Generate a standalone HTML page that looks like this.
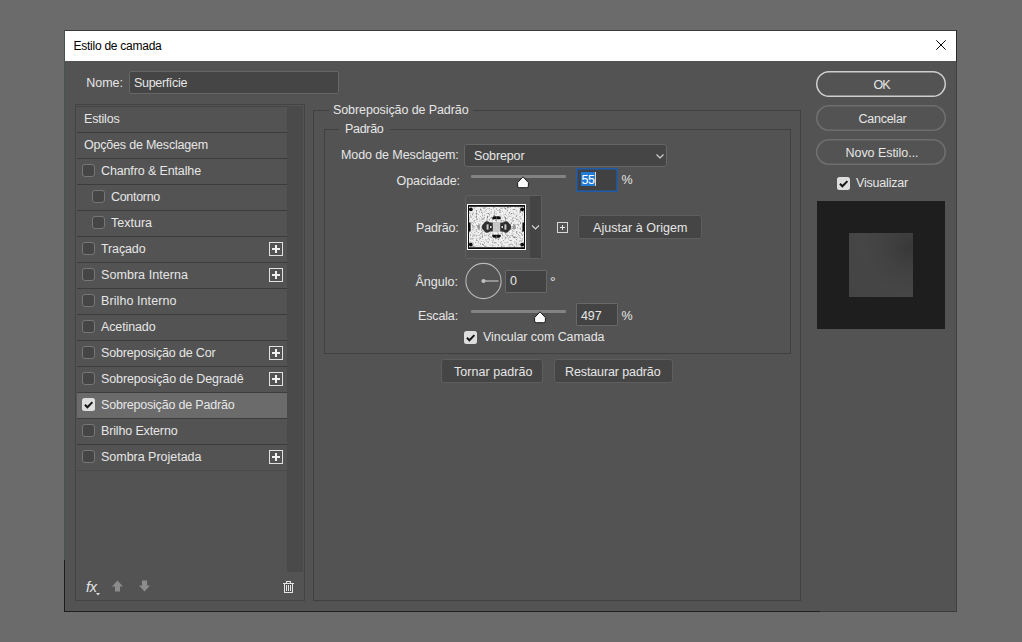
<!DOCTYPE html>
<html lang="pt-BR">
<head>
<meta charset="utf-8">
<title>Estilo de camada</title>
<style>
html,body{margin:0;padding:0;}
body{width:1022px;height:642px;overflow:hidden;background:#6b6b6b;position:relative;font-family:"Liberation Sans", sans-serif;}
.b{position:absolute;display:block;}
.t{position:absolute;white-space:pre;line-height:16px;font-family:"Liberation Sans", sans-serif;}
</style>
</head>
<body>
<div class="b" style="left:64px;top:30px;width:893px;height:582px;background:#535353;border:1px solid #1f1f1f;border-left-color:#435452;border-right-color:#404040;border-top-color:#3a3a3a;box-sizing:border-box;"></div>
<div class="b" style="left:64px;top:560px;width:1px;height:52px;background:#1c1c1c;"></div>
<div class="b" style="left:956px;top:30px;width:1px;height:32px;background:#2a2a2a;"></div>
<div class="b" style="left:820px;top:611px;width:137px;height:1px;background:#3c3c3c;"></div>
<div class="b" style="left:65px;top:31px;width:891px;height:30px;background:#ffffff;"></div>
<svg class="b" style="left:936px;top:40px" width="10" height="10" viewBox="0 0 10 10"><path d="M0.3 0.3L9.7 9.7M9.7 0.3L0.3 9.7" stroke="#000" stroke-width="1" fill="none"/></svg>
<div class="b" style="left:129px;top:71px;width:210px;height:23px;background:#454545;border:1px solid #666666;box-sizing:border-box;border-radius:2px;"></div>
<div class="b" style="left:75px;top:104px;width:230px;height:497px;border:1px solid #434343;box-sizing:border-box;"></div>
<div class="b" style="left:76px;top:106px;width:211px;height:1px;background:#454545;"></div>
<div class="b" style="left:287px;top:106px;width:16px;height:466px;background:#4a4a4a;"></div>
<div class="b" style="left:77px;top:132px;width:210px;height:1px;background:#3c3c3c;"></div>
<div class="b" style="left:77px;top:158px;width:210px;height:1px;background:#3c3c3c;"></div>
<div class="b" style="left:77px;top:184px;width:210px;height:1px;background:#3c3c3c;"></div>
<div class="b" style="left:82px;top:164px;width:13px;height:13px;background:#454545;border:1px solid #767676;border-radius:3px;box-sizing:border-box;"></div>
<div class="b" style="left:77px;top:210px;width:210px;height:1px;background:#3c3c3c;"></div>
<div class="b" style="left:92px;top:190px;width:13px;height:13px;background:#454545;border:1px solid #767676;border-radius:3px;box-sizing:border-box;"></div>
<div class="b" style="left:77px;top:236px;width:210px;height:1px;background:#3c3c3c;"></div>
<div class="b" style="left:92px;top:216px;width:13px;height:13px;background:#454545;border:1px solid #767676;border-radius:3px;box-sizing:border-box;"></div>
<div class="b" style="left:77px;top:262px;width:210px;height:1px;background:#3c3c3c;"></div>
<div class="b" style="left:82px;top:242px;width:13px;height:13px;background:#454545;border:1px solid #767676;border-radius:3px;box-sizing:border-box;"></div>
<div class="b" style="left:269px;top:242px;width:14px;height:14px;border:1px solid #e0e0e0;box-sizing:border-box;"><svg width="12" height="12" viewBox="0 0 12 12" style="display:block"><path d="M6 2v8M2 6h8" stroke="#f0f0f0" stroke-width="2" fill="none"/></svg></div>
<div class="b" style="left:77px;top:288px;width:210px;height:1px;background:#3c3c3c;"></div>
<div class="b" style="left:82px;top:268px;width:13px;height:13px;background:#454545;border:1px solid #767676;border-radius:3px;box-sizing:border-box;"></div>
<div class="b" style="left:269px;top:268px;width:14px;height:14px;border:1px solid #e0e0e0;box-sizing:border-box;"><svg width="12" height="12" viewBox="0 0 12 12" style="display:block"><path d="M6 2v8M2 6h8" stroke="#f0f0f0" stroke-width="2" fill="none"/></svg></div>
<div class="b" style="left:77px;top:314px;width:210px;height:1px;background:#3c3c3c;"></div>
<div class="b" style="left:82px;top:294px;width:13px;height:13px;background:#454545;border:1px solid #767676;border-radius:3px;box-sizing:border-box;"></div>
<div class="b" style="left:77px;top:340px;width:210px;height:1px;background:#3c3c3c;"></div>
<div class="b" style="left:82px;top:320px;width:13px;height:13px;background:#454545;border:1px solid #767676;border-radius:3px;box-sizing:border-box;"></div>
<div class="b" style="left:77px;top:366px;width:210px;height:1px;background:#3c3c3c;"></div>
<div class="b" style="left:82px;top:346px;width:13px;height:13px;background:#454545;border:1px solid #767676;border-radius:3px;box-sizing:border-box;"></div>
<div class="b" style="left:269px;top:346px;width:14px;height:14px;border:1px solid #e0e0e0;box-sizing:border-box;"><svg width="12" height="12" viewBox="0 0 12 12" style="display:block"><path d="M6 2v8M2 6h8" stroke="#f0f0f0" stroke-width="2" fill="none"/></svg></div>
<div class="b" style="left:77px;top:392px;width:210px;height:1px;background:#3c3c3c;"></div>
<div class="b" style="left:82px;top:372px;width:13px;height:13px;background:#454545;border:1px solid #767676;border-radius:3px;box-sizing:border-box;"></div>
<div class="b" style="left:269px;top:372px;width:14px;height:14px;border:1px solid #e0e0e0;box-sizing:border-box;"><svg width="12" height="12" viewBox="0 0 12 12" style="display:block"><path d="M6 2v8M2 6h8" stroke="#f0f0f0" stroke-width="2" fill="none"/></svg></div>
<div class="b" style="left:77px;top:393px;width:210px;height:25px;background:#6b6b6b;"></div>
<div class="b" style="left:77px;top:418px;width:210px;height:1px;background:#3c3c3c;"></div>
<div class="b" style="left:82px;top:398px;width:13px;height:13px;background:#dedede;border-radius:2.5px;"><svg width="13" height="13" viewBox="0 0 13 13"><path d="M2.9 5.8 L5.4 8.3 L10.4 3.1" fill="none" stroke="#161616" stroke-width="2"/></svg></div>
<div class="b" style="left:77px;top:444px;width:210px;height:1px;background:#3c3c3c;"></div>
<div class="b" style="left:82px;top:424px;width:13px;height:13px;background:#454545;border:1px solid #767676;border-radius:3px;box-sizing:border-box;"></div>
<div class="b" style="left:77px;top:470px;width:210px;height:1px;background:#494949;"></div>
<div class="b" style="left:82px;top:450px;width:13px;height:13px;background:#454545;border:1px solid #767676;border-radius:3px;box-sizing:border-box;"></div>
<div class="b" style="left:269px;top:450px;width:14px;height:14px;border:1px solid #e0e0e0;box-sizing:border-box;"><svg width="12" height="12" viewBox="0 0 12 12" style="display:block"><path d="M6 2v8M2 6h8" stroke="#f0f0f0" stroke-width="2" fill="none"/></svg></div>
<div class="b" style="left:313px;top:110px;width:488px;height:491px;border:1px solid #404040;box-sizing:border-box;"></div>
<div class="b" style="left:329px;top:104px;width:144px;height:14px;background:#535353;"></div>
<div class="b" style="left:324px;top:129px;width:467px;height:225px;border:1px solid #404040;box-sizing:border-box;"></div>
<div class="b" style="left:339px;top:123px;width:51px;height:14px;background:#535353;"></div>
<div class="b" style="left:464px;top:144px;width:203px;height:23px;background:#454545;border:1px solid #666;box-sizing:border-box;border-radius:3px;"></div>
<svg class="b" style="left:654.5px;top:153px" width="10" height="7" viewBox="0 0 10 7"><path d="M1.5 1.5L5 5L8.5 1.5" stroke="#d0d0d0" stroke-width="1.2" fill="none"/></svg>
<div class="b" style="left:471px;top:175px;width:95px;height:3px;background:#838383;border-radius:1px;"></div>
<svg class="b" style="left:516px;top:176px" width="14" height="13" viewBox="0 0 14 13"><path d="M7 0.8 L12.4 6.6 L12.4 10 Q12.4 11.7 10.7 11.7 L3.3 11.7 Q1.6 11.7 1.6 10 L1.6 6.6 Z" fill="#fbfbfb" stroke="#1c1c1c" stroke-width="1"/></svg>
<div class="b" style="left:471px;top:310px;width:95px;height:3px;background:#838383;border-radius:1px;"></div>
<svg class="b" style="left:533px;top:311px" width="14" height="13" viewBox="0 0 14 13"><path d="M7 0.8 L12.4 6.6 L12.4 10 Q12.4 11.7 10.7 11.7 L3.3 11.7 Q1.6 11.7 1.6 10 L1.6 6.6 Z" fill="#fbfbfb" stroke="#1c1c1c" stroke-width="1"/></svg>
<div class="b" style="left:576px;top:168px;width:42px;height:24px;background:#414141;border:1px solid #1f5daa;box-shadow:inset 0 0 0 1px rgba(31,93,170,0.55);box-sizing:border-box;"></div>
<div class="b" style="left:580.5px;top:172px;width:14.5px;height:14px;background:#1f7ad8;"></div>
<div class="b" style="left:595px;top:172px;width:1px;height:14px;background:#e0d8a8;"></div>
<div class="b" style="left:576px;top:303px;width:42px;height:23px;background:#434343;border:1px solid #686868;box-sizing:border-box;border-radius:1px;"></div>
<div class="b" style="left:505px;top:270px;width:42px;height:23px;background:#434343;border:1px solid #686868;box-sizing:border-box;border-radius:1px;"></div>
<div class="b" style="left:465px;top:195px;width:77px;height:64px;border:1px solid #5f5f5f;box-sizing:border-box;border-radius:2px;background:#515151;"></div>
<div class="b" style="left:530px;top:196px;width:11px;height:62px;background:#444444;"></div>
<svg class="b" style="left:531px;top:224px" width="9" height="7" viewBox="0 0 9 7"><path d="M1 1.5L4.5 5L8 1.5" stroke="#d6d6d6" stroke-width="1.1" fill="none"/></svg>
<svg class="b" style="left:467px;top:204px" width="59" height="46" viewBox="0 0 59 46">
<defs>
<filter id="nz" x="0" y="0" width="100%" height="100%"><feTurbulence type="fractalNoise" baseFrequency="0.55" numOctaves="2" seed="7"/><feColorMatrix type="matrix" values="0 0 0 0 0  0 0 0 0 0  0 0 0 0 0  2.2 2.2 0 0 -2.15"/></filter>
<g id="q">
<circle cx="3.8" cy="5.3" r="1.9" fill="#0a0a0a"/>
<rect x="2" y="2" width="27.5" height="1" fill="#1a1a1a" opacity="0.8"/>
<rect x="2" y="18.5" width="1.6" height="4.5" fill="#111"/>
<path d="M29.5 12.2 L26.5 12.2 Q24.8 13 25.2 15.2 L29.5 15.2 Z" fill="#0e0e0e"/>
<path d="M25.8 18.6 L23 18.4 Q19.5 16 17.6 18.4 Q15.2 20.5 14.6 23 L25.8 23 Z" fill="#303030"/>
<path d="M19.6 23 L19.6 20.4 L21.6 20.4 L21.6 23 Z" fill="#c8c8c8"/>
<path d="M10 23 Q10.6 20.5 12.4 19.8 L13.2 23 Z" fill="#9a9a9a"/>
<rect x="26.2" y="18" width="3.3" height="5" fill="#c6c6c6"/>
</g>
</defs>
<rect x="0" y="0" width="59" height="46" fill="#ffffff"/>
<rect x="1" y="1" width="57" height="44" fill="#0c0c0c"/>
<rect x="2" y="2" width="55" height="42" fill="#f0f0f0"/>
<rect x="2" y="2" width="55" height="42" fill="#505050" filter="url(#nz)" opacity="0.45"/>
<use href="#q"/>
<use href="#q" transform="translate(59,0) scale(-1,1)"/>
<use href="#q" transform="translate(0,46) scale(1,-1)"/>
<use href="#q" transform="translate(59,46) scale(-1,-1)"/>
<circle cx="23.8" cy="23" r="1.5" fill="#f4f4f4" stroke="#111" stroke-width="0.9"/>
<circle cx="35.2" cy="23" r="1.5" fill="#f4f4f4" stroke="#111" stroke-width="0.9"/>
</svg>
<div class="b" style="left:557px;top:222px;width:11px;height:11px;border:1px solid #d8d8d8;box-sizing:border-box;"><svg width="9" height="9" viewBox="0 0 9 9" style="display:block"><path d="M4.5 2v5M2 4.5h5" stroke="#e8e8e8" stroke-width="1" fill="none"/></svg></div>
<div class="b" style="left:578px;top:215px;width:124px;height:24px;background:#454545;border:1px solid #5e5e5e;box-sizing:border-box;border-radius:3px;"></div>
<div class="b" style="left:441px;top:359px;width:102px;height:24px;background:#454545;border:1px solid #5e5e5e;box-sizing:border-box;border-radius:3px;"></div>
<div class="b" style="left:554px;top:359px;width:119px;height:24px;background:#454545;border:1px solid #5e5e5e;box-sizing:border-box;border-radius:3px;"></div>
<svg class="b" style="left:464.6px;top:262px" width="38" height="38" viewBox="0 0 38 38"><circle cx="18.5" cy="19" r="17.6" fill="none" stroke="#b8b8b8" stroke-width="1.1"/><path d="M18.5 19H33.5" stroke="#b0b0b0" stroke-width="1.4"/><circle cx="18.5" cy="19" r="2.1" fill="#c0c0c0"/></svg>
<div class="b" style="left:464px;top:331px;width:13px;height:13px;background:#dedede;border-radius:2.5px;"><svg width="13" height="13" viewBox="0 0 13 13"><path d="M2.9 5.8 L5.4 8.3 L10.4 3.1" fill="none" stroke="#161616" stroke-width="2"/></svg></div>
<svg class="b" style="left:815px;top:70px" width="132" height="28" viewBox="0 0 132 28"><rect x="1.75" y="1.75" width="128.5" height="24.5" rx="12.25" fill="none" stroke="#cfcfcf" stroke-width="1.5"/></svg>
<svg class="b" style="left:815px;top:104px" width="132" height="28" viewBox="0 0 132 28"><rect x="1.75" y="1.75" width="128.5" height="24.5" rx="12.25" fill="none" stroke="#6e6e6e" stroke-width="1.7"/></svg>
<svg class="b" style="left:815px;top:138px" width="132" height="28" viewBox="0 0 132 28"><rect x="1.75" y="1.75" width="128.5" height="24.5" rx="12.25" fill="none" stroke="#6e6e6e" stroke-width="1.7"/></svg>
<div class="b" style="left:837px;top:177px;width:13px;height:13px;background:#dedede;border-radius:2.5px;"><svg width="13" height="13" viewBox="0 0 13 13"><path d="M2.9 5.8 L5.4 8.3 L10.4 3.1" fill="none" stroke="#161616" stroke-width="2"/></svg></div>
<div class="b" style="left:817px;top:201px;width:128px;height:128px;background:#1e1e1e;"></div>
<div class="b" style="left:849px;top:233px;width:64px;height:64px;background:radial-gradient(circle at 95% 22%, #383838 0%, #414141 28%, #464646 60%, #444444 100%);"></div>
<span class="t" style="left:86px;top:578.5px;font-size:14.5px;font-style:italic;color:#e4e4e4;letter-spacing:-0.3px">fx</span>
<svg class="b" style="left:96.3px;top:593px" width="4" height="3" viewBox="0 0 4 3"><path d="M0 0H4L2 2.5Z" fill="#e0e0e0"/></svg>
<svg class="b" style="left:111px;top:580px" width="13" height="12" viewBox="0 0 13 12"><path d="M6.5 0.5L12 6.5H9V11.5H4V6.5H1Z" fill="#8c8c8c"/></svg>
<svg class="b" style="left:138px;top:580px" width="13" height="12" viewBox="0 0 13 12"><path d="M6.5 11.5L12 5.5H9V0.5H4V5.5H1Z" fill="#8c8c8c"/></svg>
<svg class="b" style="left:283px;top:581px" width="11" height="12" viewBox="0 0 11 12" shape-rendering="crispEdges"><g fill="#e4e4e4"><rect x="3" y="0" width="5" height="1"/><rect x="3" y="1" width="1" height="1"/><rect x="7" y="1" width="1" height="1"/><rect x="0" y="2" width="11" height="1"/><rect x="1" y="3" width="1" height="9"/><rect x="9" y="3" width="1" height="9"/><rect x="1" y="11" width="9" height="1"/><rect x="3" y="4" width="1" height="6"/><rect x="5" y="4" width="1" height="6"/><rect x="7" y="4" width="1" height="6"/></g></svg>
<span class="t" style="left:73.50px;top:37.84px;color:#000000;font-size:12px;letter-spacing:-0.254px;">Estilo de camada</span>
<span class="t" style="left:86.30px;top:74.67px;color:#e6e6e6;font-size:12.5px;letter-spacing:-0.066px;">Nome:</span>
<span class="t" style="left:134.00px;top:74.67px;color:#e6e6e6;font-size:12.5px;letter-spacing:-0.328px;">Superfície</span>
<span class="t" style="left:84.00px;top:110.67px;color:#e6e6e6;font-size:12.5px;letter-spacing:-0.190px;">Estilos</span>
<span class="t" style="left:84.00px;top:136.67px;color:#e6e6e6;font-size:12.5px;letter-spacing:-0.202px;">Opções de Mesclagem</span>
<span class="t" style="left:101.00px;top:162.67px;color:#e6e6e6;font-size:12.5px;letter-spacing:-0.127px;">Chanfro &amp; Entalhe</span>
<span class="t" style="left:111.00px;top:188.67px;color:#e6e6e6;font-size:12.5px;letter-spacing:-0.305px;">Contorno</span>
<span class="t" style="left:111.00px;top:214.67px;color:#e6e6e6;font-size:12.5px;">Textura</span>
<span class="t" style="left:101.00px;top:240.67px;color:#e6e6e6;font-size:12.5px;letter-spacing:-0.129px;">Traçado</span>
<span class="t" style="left:101.00px;top:266.67px;color:#e6e6e6;font-size:12.5px;letter-spacing:0.059px;">Sombra Interna</span>
<span class="t" style="left:101.00px;top:292.67px;color:#e6e6e6;font-size:12.5px;letter-spacing:0.081px;">Brilho Interno</span>
<span class="t" style="left:101.00px;top:318.67px;color:#e6e6e6;font-size:12.5px;letter-spacing:-0.123px;">Acetinado</span>
<span class="t" style="left:101.00px;top:344.67px;color:#e6e6e6;font-size:12.5px;letter-spacing:-0.155px;">Sobreposição de Cor</span>
<span class="t" style="left:101.00px;top:370.67px;color:#e6e6e6;font-size:12.5px;letter-spacing:-0.120px;">Sobreposição de Degradê</span>
<span class="t" style="left:101.00px;top:396.67px;color:#e6e6e6;font-size:12.5px;letter-spacing:-0.187px;">Sobreposição de Padrão</span>
<span class="t" style="left:101.00px;top:422.67px;color:#e6e6e6;font-size:12.5px;letter-spacing:-0.144px;">Brilho Externo</span>
<span class="t" style="left:101.00px;top:448.67px;color:#e6e6e6;font-size:12.5px;letter-spacing:-0.017px;">Sombra Projetada</span>
<span class="t" style="left:333.00px;top:101.67px;color:#e6e6e6;font-size:12.5px;letter-spacing:-0.096px;">Sobreposição de Padrão</span>
<span class="t" style="left:345.00px;top:120.67px;color:#e6e6e6;font-size:12.5px;letter-spacing:-0.302px;">Padrão</span>
<span class="t" style="left:341.00px;top:146.67px;color:#e6e6e6;font-size:12.5px;letter-spacing:-0.098px;">Modo de Mesclagem:</span>
<span class="t" style="left:474.00px;top:147.67px;color:#e6e6e6;font-size:12.5px;letter-spacing:-0.117px;">Sobrepor</span>
<span class="t" style="left:396.50px;top:172.67px;color:#e6e6e6;font-size:12.5px;letter-spacing:-0.044px;">Opacidade:</span>
<span class="t" style="left:581.50px;top:171.67px;color:#ffffff;font-size:12.5px;letter-spacing:-0.453px;">55</span>
<span class="t" style="left:621.50px;top:171.67px;color:#e6e6e6;font-size:12.5px;">%</span>
<span class="t" style="left:416.00px;top:219.67px;color:#e6e6e6;font-size:12.5px;letter-spacing:-0.183px;">Padrão:</span>
<span class="t" style="left:593.00px;top:219.67px;color:#e6e6e6;font-size:12.5px;letter-spacing:0.045px;">Ajustar à Origem</span>
<span class="t" style="left:415.50px;top:273.67px;color:#e6e6e6;font-size:12.5px;letter-spacing:0.013px;">Ângulo:</span>
<span class="t" style="left:510.00px;top:272.97px;color:#e6e6e6;font-size:12.5px;">0</span>
<span class="t" style="left:550.00px;top:274.15px;color:#e6e6e6;font-size:14px;">°</span>
<span class="t" style="left:418.00px;top:307.67px;color:#e6e6e6;font-size:12.5px;letter-spacing:-0.143px;">Escala:</span>
<span class="t" style="left:581.00px;top:307.67px;color:#e6e6e6;font-size:12.5px;letter-spacing:-0.120px;">497</span>
<span class="t" style="left:621.50px;top:307.67px;color:#e6e6e6;font-size:12.5px;">%</span>
<span class="t" style="left:483.00px;top:328.67px;color:#e6e6e6;font-size:12.5px;letter-spacing:-0.066px;">Vincular com Camada</span>
<span class="t" style="left:454.00px;top:363.67px;color:#e6e6e6;font-size:12.5px;letter-spacing:0.052px;">Tornar padrão</span>
<span class="t" style="left:565.00px;top:363.67px;color:#e6e6e6;font-size:12.5px;letter-spacing:-0.111px;">Restaurar padrão</span>
<span class="t" style="left:873.50px;top:76.67px;color:#e6e6e6;font-size:12.5px;letter-spacing:-1.031px;">OK</span>
<span class="t" style="left:858.50px;top:110.67px;color:#e6e6e6;font-size:12.5px;letter-spacing:-0.254px;">Cancelar</span>
<span class="t" style="left:845.50px;top:144.67px;color:#e6e6e6;font-size:12.5px;letter-spacing:-0.046px;">Novo Estilo...</span>
<span class="t" style="left:856.00px;top:174.67px;color:#e6e6e6;font-size:12.5px;letter-spacing:-0.197px;">Visualizar</span>
</body>
</html>
